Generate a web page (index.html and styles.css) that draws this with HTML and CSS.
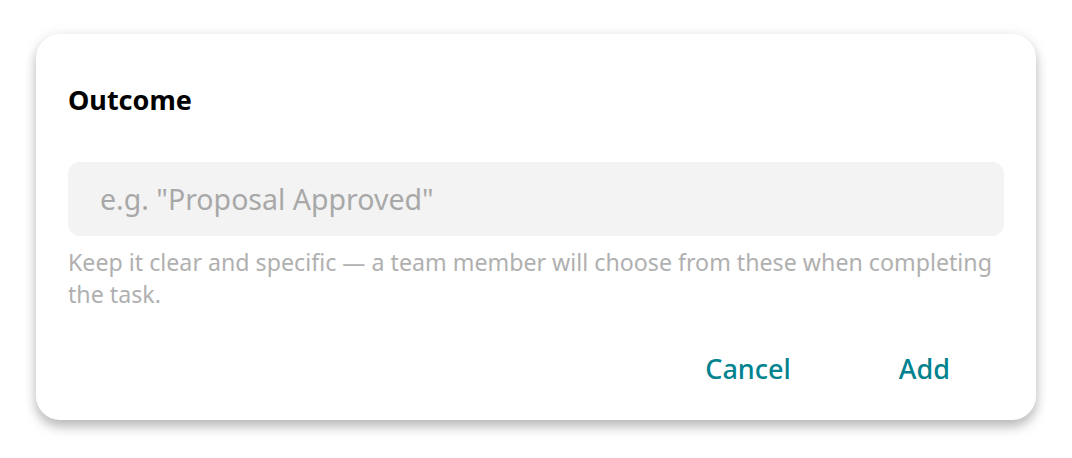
FILE: index.html
```html
<!DOCTYPE html>
<html lang="en">

<head>
    <meta charset="UTF-8">
    <meta name="viewport" content="width=device-width, initial-scale=1.0">
    <title>Outcome</title>
    <link rel="stylesheet" href="styles.css">
</head>

<body>
    <div class="dialog">
        <h2 class="dialog-title">Outcome</h2>
        <input class="field" type="text" placeholder='e.g. "Proposal Approved"'>
        <p class="hint">Keep it clear and specific — a team member will choose from these when completing the task.</p>
        <div class="actions">
            <button class="btn">Cancel</button>
            <button class="btn">Add</button>
        </div>
    </div>
</body>

</html>
```

FILE: styles.css
```css
body {
    margin: 0;
    padding: 34px 36px;
    background: #ffffff;
    font-family: "Noto Sans", "Open Sans", sans-serif;
}

.dialog {
    width: 1000px;
    box-sizing: border-box;
    height: 386px;
    padding: 50px 32px 0 32px;
    background: #fff;
    border-radius: 24px;
    box-shadow: 0 7px 12px rgba(0, 0, 0, 0.25), 0 0 14px rgba(0, 0, 0, 0.06);
    display: flex;
    flex-direction: column;
}

.dialog-title {
    margin: 0;
    font-size: 27px;
    line-height: 32px;
    font-weight: 700;
    color: #000;
}

.field {
    margin-top: 46px;
    height: 74px;
    box-sizing: border-box;
    border: none;
    border-radius: 12px;
    background: #f3f3f3;
    padding: 0 32px;
    font-family: inherit;
    font-size: 28.5px;
    color: #333;
    outline: none;
}

.field::placeholder {
    color: #a8a8a8;
}

.hint {
    margin: 10px 0 0 0;
    font-size: 23.2px;
    line-height: 32px;
    color: #b0b0b0;
}

.actions {
    margin-top: 32px;
    display: flex;
    justify-content: flex-end;
    gap: 44px;
    padding-right: 22px;
}

.btn {
    border: none;
    background: none;
    padding: 8px 32px;
    font-family: inherit;
    font-size: 27px;
    font-weight: 500;
    color: #00838f;
    cursor: pointer;
}
```
